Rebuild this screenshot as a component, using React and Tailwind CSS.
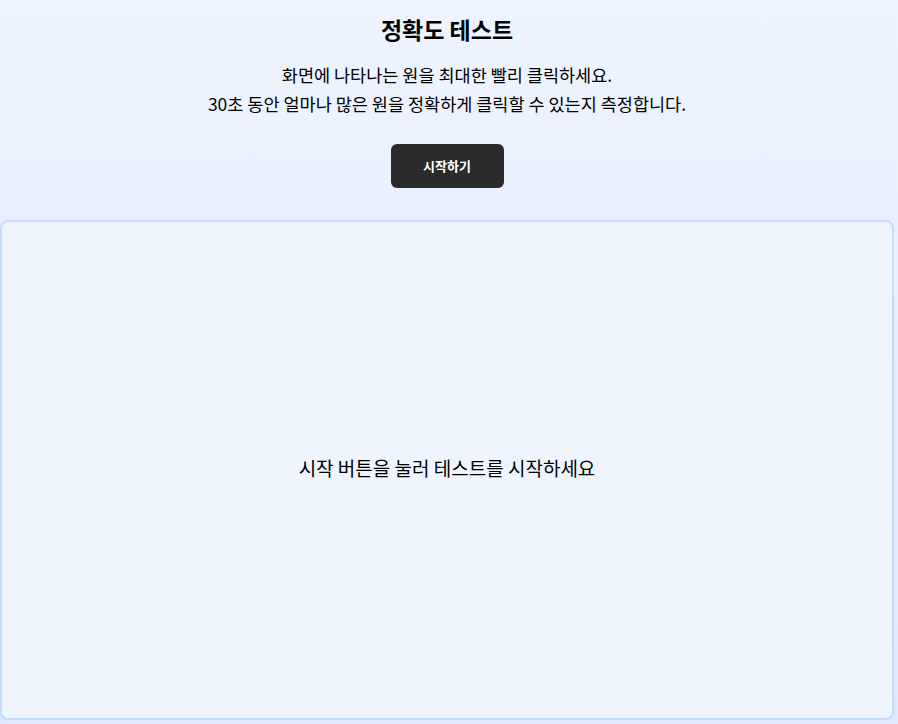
export default function App() {
  return (
    <div
      className="min-h-[724px] bg-gradient-to-b from-[#eef4ff] to-[#dde9fd] text-black"
      style={{ fontFamily: '"Noto Sans CJK KR", "Noto Sans", sans-serif' }}
    >
      <div className="mr-[4px] flex flex-col">
        <header className="flex flex-col items-center pt-[12px]">
          <h1 className="text-[23px] font-bold leading-[34px]">정확도 테스트</h1>
          <div className="mt-[14px] text-center text-[17.5px] leading-[29px]">
            <p>화면에 나타나는 원을 최대한 빨리 클릭하세요.</p>
            <p>30초 동안 얼마나 많은 원을 정확하게 클릭할 수 있는지 측정합니다.</p>
          </div>
          <button className="mt-[26px] h-[44px] w-[113px] rounded-md bg-[#2b2b2b] text-[13px] font-bold text-white">
            시작하기
          </button>
        </header>

        {/* play area */}
        <div className="mt-[32px] flex h-[500px] items-center justify-center rounded-lg border-2 border-[#c4dcfd] bg-[#eef5ff] pb-[4px]">
          <p className="text-[19px]">시작 버튼을 눌러 테스트를 시작하세요</p>
        </div>
      </div>
    </div>
  );
}
